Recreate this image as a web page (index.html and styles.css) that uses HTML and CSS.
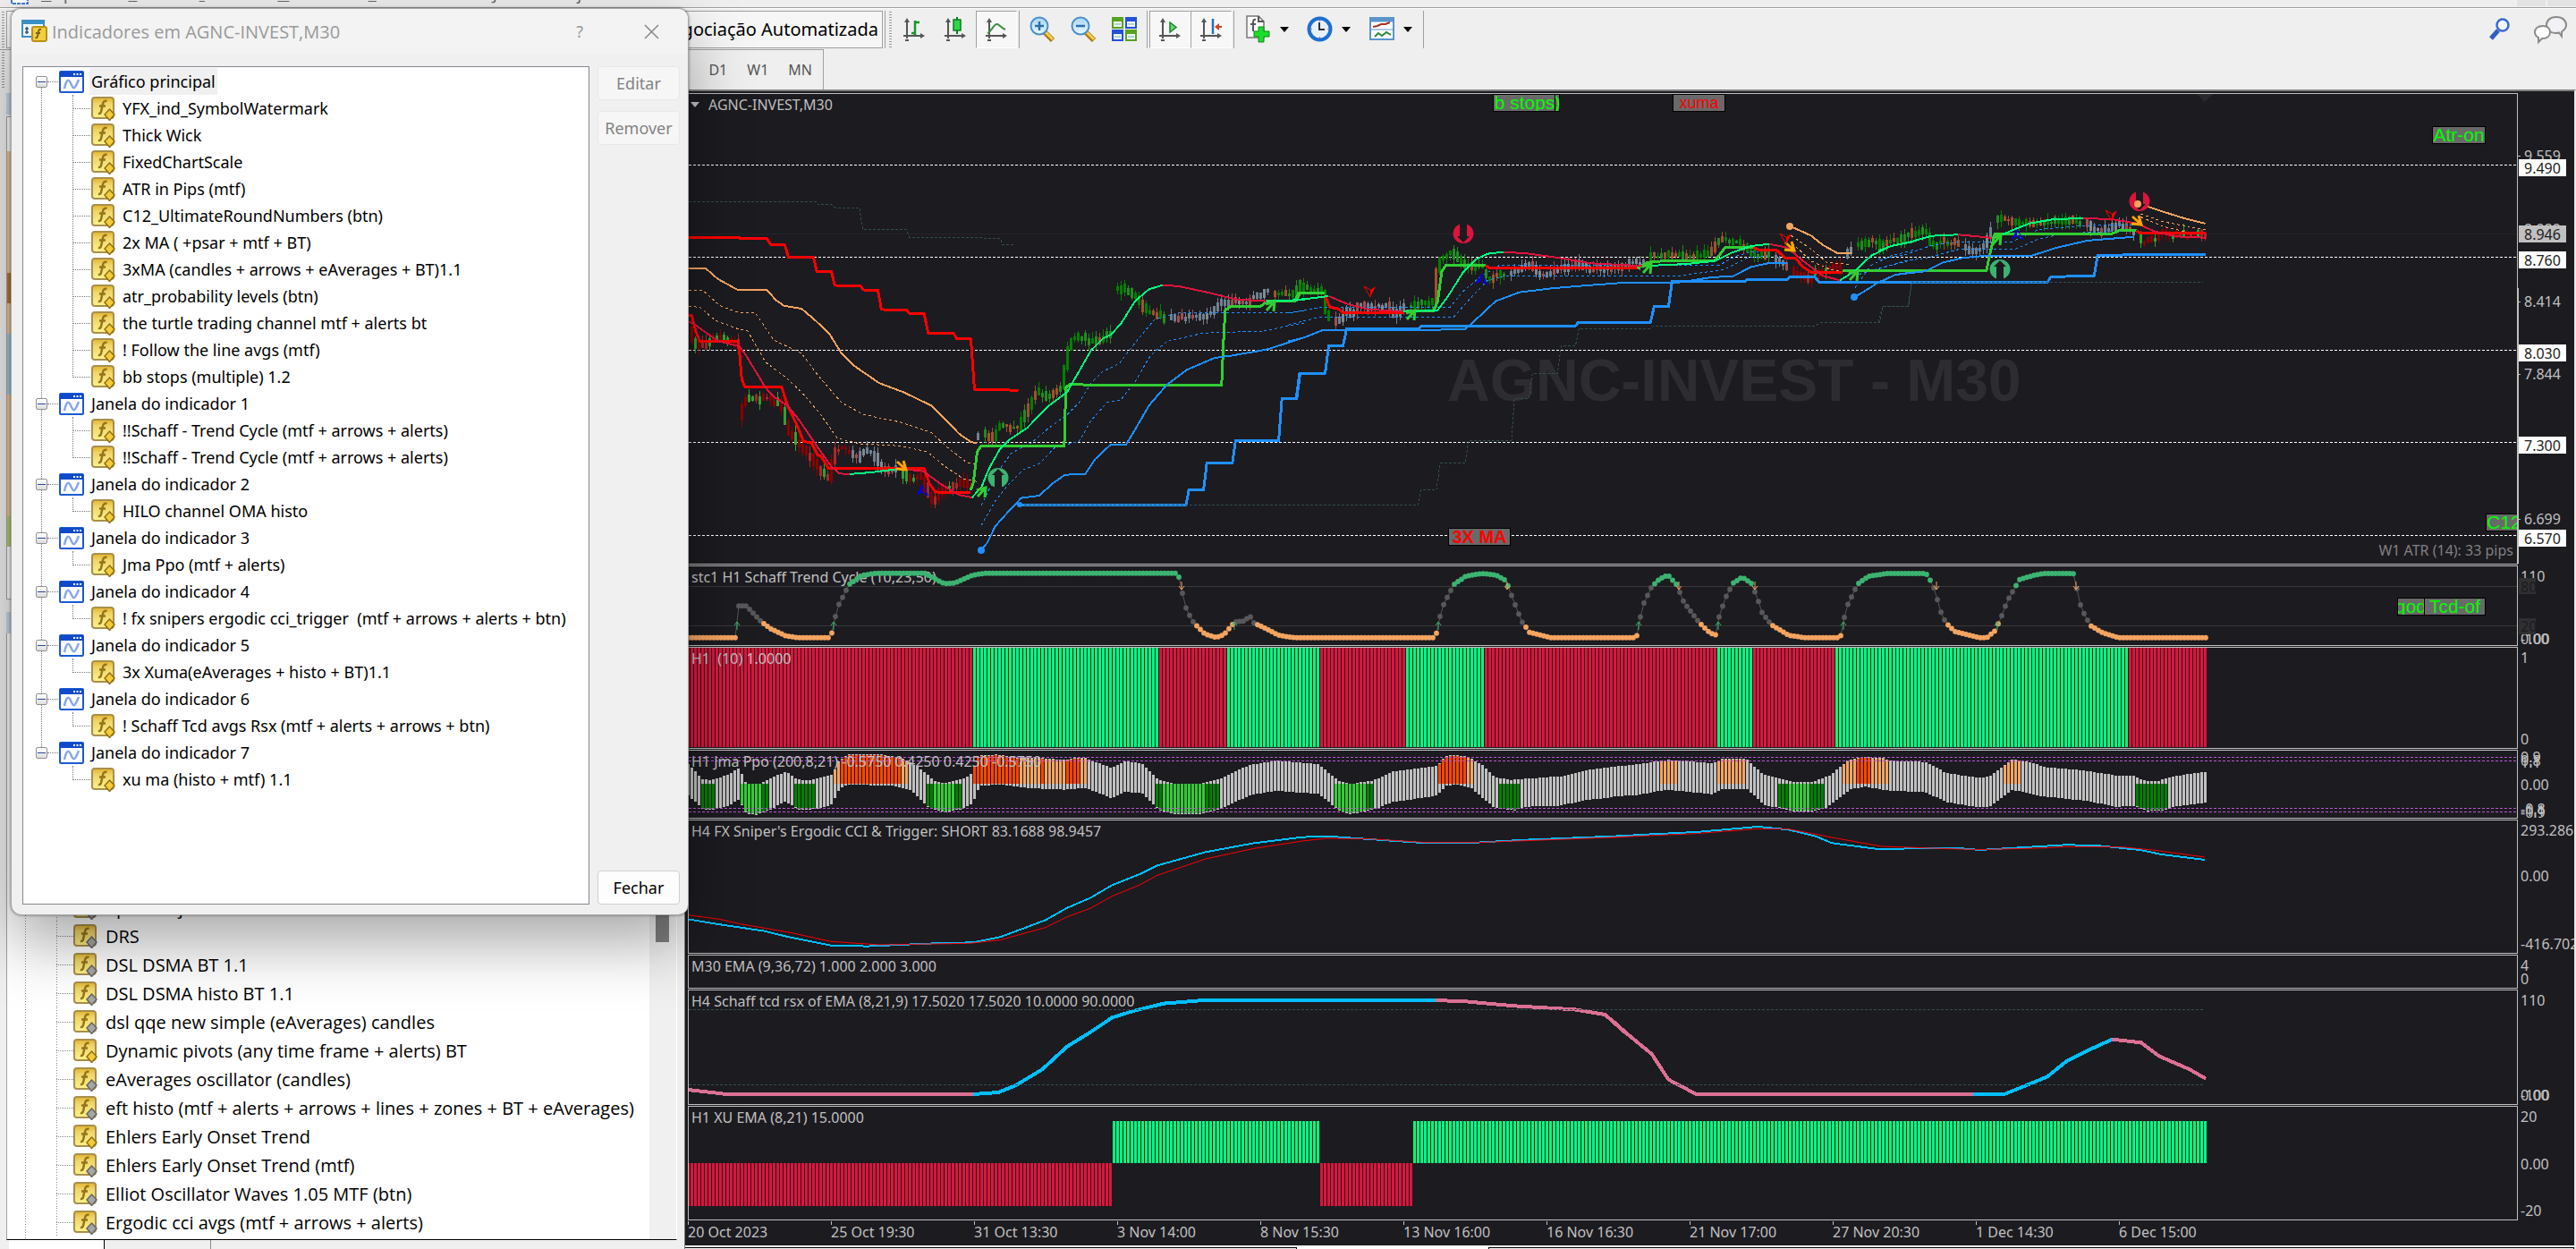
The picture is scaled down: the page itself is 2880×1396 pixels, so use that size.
FILE: index.html
```html
<!DOCTYPE html>
<html lang="pt">
	<head>
		<meta charset="utf-8">
		<title>AGNC-INVEST,M30</title>
		<link rel="stylesheet" href="styles.css">
	</head>
	<body>

		<!-- icons -->
		<svg class="defs">
			<defs>
				<linearGradient id="gold" x1="0" y1="0" x2="0" y2="1">
					<stop offset="0" stop-color="#e3b32c"/>
					<stop offset=".3" stop-color="#f0d468"/>
					<stop offset="1" stop-color="#fdf28c"/>
				</linearGradient>
				<linearGradient id="glass" x1="0" y1="0" x2="0" y2="1">
					<stop offset="0" stop-color="#a9d5f5"/>
					<stop offset="1" stop-color="#eaf7ff"/>
				</linearGradient>
			</defs>
			<symbol id="ind" viewBox="0 0 27 27">
				<rect x="1" y="1" width="24" height="23" rx="3" fill="url(#gold)" stroke="#a88f4c" stroke-width="2"/>
				<path d="M17.500 5c-2.500-.8-4 .5-4.500 3l-2 9c-.4 1.800-1.500 2.300-3 1.800M9 10.500h7" fill="none" stroke="#93751c" stroke-width="2.500"/>
				<path class="gem" d="M20.500 14l5.500 6-5.500 6.500-5.500-6.500z"/>
			</symbol>
			<symbol id="win" viewBox="0 0 28 25">
				<rect x="1" y="1" width="26" height="23" rx="1" fill="#fff" stroke="#1c5ad2" stroke-width="2"/>
				<path d="M1 1h26v6H1z" fill="#0f49cc"/>
				<path d="M16 3h2v2h-2zM19.500 3h2v2h-2zM23 3h2v2h-2z" fill="#fff"/>
				<path d="M6 20c1-6 3-10 5-9s3 7 5 8 4-4 6-9" fill="none" stroke="#86a8ea" stroke-width="2.500"/>
			</symbol>
			<symbol id="axes" viewBox="0 0 26 26">
				<path d="M5 3v20M1 20h22" fill="none" stroke="#555" stroke-width="2"/>
				<path d="M5 0l3 5H2zM25 20l-5-3v6zM3 24h4v2H3z" fill="#555"/>
			</symbol>
			<symbol id="lens" viewBox="0 0 30 30">
				<path d="M18 18l9 9" stroke="#a87a13" stroke-width="6"/>
				<path d="M19 18l8 8" stroke="#f5cf4d" stroke-width="3"/>
				<circle cx="12" cy="11" r="9.500" fill="url(#glass)" stroke="#4a8fcf" stroke-width="2"/>
			</symbol>
		</svg>

		<header class="menu">
			<svg class="menu-icon" viewBox="0 0 20 8"><path d="M1 0v4h18V0" fill="#fff" stroke="#4a7fd6" stroke-width="2" stroke-dasharray="4 1"/></svg>
			<nav>
				<button><u>A</u>rquivo</button>
				<button><u>E</u>xibir</button>
				<button><u>I</u>nserir</button>
				<button><u>G</u>ráficos</button>
				<button><u>F</u>erramentas</button>
				<button><u>J</u>anela</button>
				<button>Ajuda</button>
			</nav>
			<div class="win-btns"><i></i><i></i></div>
		</header>

		<div class="toolbar">
			<span class="grip"></span>
			<button class="auto">Negociação Automatizada</button>
			<span class="sep"></span>
			<span class="grip"></span>
			<button class="tool" aria-label="Barras"><svg width="26" height="26"><use href="#axes"/><path d="M14 3v16M14 5h5M10 17h4" fill="none" stroke="#18962a" stroke-width="2.500"/></svg></button>
			<button class="tool" aria-label="Velas"><svg width="26" height="26"><use href="#axes"/><path d="M15-1v19" stroke="#0c7c1c" stroke-width="2"/><rect x="11" y="2" width="8" height="12" fill="#2fd745" stroke="#0c7c1c" stroke-width="1.500"/></svg></button>
			<button class="tool on" aria-label="Linha"><svg width="26" height="26"><use href="#axes"/><path d="M3 17c5-2 7-11 11-10 3 1 5 5 9 6" fill="none" stroke="#3f8f46" stroke-width="2"/></svg></button>
			<span class="sep"></span>
			<button class="tool" aria-label="Mais zoom"><svg width="30" height="30"><use href="#lens"/><path d="M7 11h10M12 6v10" stroke="#2a6fb0" stroke-width="2.500"/></svg></button>
			<button class="tool" aria-label="Menos zoom"><svg width="30" height="30"><use href="#lens"/><path d="M7 11h10" stroke="#2a6fb0" stroke-width="2.500"/></svg></button>
			<button class="tool" aria-label="Lado a lado"><svg width="28" height="28"><path d="M0 0h13v13H0zM15 14h13v13H15z" fill="#58a31c"/><path d="M15 0h13v13H15zM0 14h13v13H0z" fill="#2350d8"/><path d="M2 5h9v6H2zM17 5h9v6h-9zM2 19h9v6H2zM17 19h9v6h-9z" fill="#eef4ff"/><path d="M3 8h7M18 8h7M3 22h7M18 22h7" stroke="#9cc" stroke-width="1.500"/></svg></button>
			<span class="sep"></span>
			<button class="tool on" aria-label="Rolagem automática"><svg width="26" height="26"><use href="#axes"/><path d="M13 5l7 5.500-7 5.500z" fill="#6fd37c" stroke="#14892a" stroke-width="1.500"/></svg></button>
			<button class="tool on" aria-label="Deslocar gráfico"><svg width="26" height="26"><use href="#axes"/><path d="M15 1v17" stroke="#2a6fb0" stroke-width="2.500"/><path d="M17 10l5-4v8zM20 9h5v2h-5z" fill="#d3401a"/></svg></button>
			<span class="sep"></span>
			<button class="tool wide" aria-label="Indicadores"><svg width="28" height="31"><path d="M1 1h13l6 6v18H1z" fill="#fff" stroke="#777" stroke-width="1.500"/><path d="M14 1v6h6M11 5c-3-1-3 2-3 4v9M5 10h6" fill="none" stroke="#555" stroke-width="2"/><path d="M14 13h6v5h6v6h-6v6h-6v-6H9v-6h5z" fill="#1fdc2c" stroke="#0b8d15"/></svg><b></b></button>
			<button class="tool wide" aria-label="Períodos"><svg width="29" height="29"><circle cx="14.500" cy="14.500" r="12" fill="#e8f1fb" stroke="#1f6fd0" stroke-width="4"/><path d="M14 7v8h6" fill="none" stroke="#333" stroke-width="2"/><path d="M14.500 4v2M14.500 23v2M4 14.500h2M23 14.500h2" stroke="#888"/></svg><b></b></button>
			<button class="tool wide" aria-label="Modelos"><svg width="28" height="27"><rect x="1" y="1" width="26" height="24" fill="#fff" stroke="#5a94cc" stroke-width="2"/><path d="M1 1h26v4H1zM1 14h26" fill="#5a94cc" stroke="#5a94cc"/><path d="M4 11l5-1 4-2 5 0 5-2" fill="none" stroke="#a2331f" stroke-width="2"/><path d="M6 22l4-4 4 3 5-4 5 3" fill="none" stroke="#2b8a33" stroke-width="2"/></svg><b></b></button>
			<span class="sep end"></span>
			<div class="right-tools">
				<button aria-label="Pesquisar"><svg width="25" height="25"><path d="M10 14l-8 9" stroke="#2f5fc0" stroke-width="5"/><circle cx="15" cy="8" r="6.500" fill="#f4f8ff" stroke="#3a6cd0" stroke-width="2.500"/></svg></button>
				<button aria-label="Conversa"><svg width="38" height="30"><path d="M26 1c-7 0-11 4-11 9s4 9 10 9c2 0 3 0 4-.5l3 4v-5c3-2 5-4 5-7.500 0-5-4-9-11-9z" fill="#f2f2f6" stroke="#8b8b8b" stroke-width="2"/><path d="M11 11c-6 0-9 3-9 7s2 5 4 6v5l4-4c6 0 9-3 9-7s-3-7-8-7z" fill="#fff" stroke="#8b8b8b" stroke-width="2"/></svg></button>
			</div>
		</div>

		<div class="toolbar periods">
			<span class="grip"></span>
			<button>D1</button>
			<button>W1</button>
			<button>MN</button>
		</div>

		<div class="workspace">

			<aside class="side">
				<div class="market">
					<div class="caption"></div>
					<div class="rows"></div>
				</div>
				<div class="nav">
					<div class="caption"></div>
					<div class="nav-list">
						<ul>
							<li><svg class="grey"><use href="#ind"/></svg>optwma jma ribbon</li>
							<li><svg class="grey"><use href="#ind"/></svg>DRS</li>
							<li><svg class="grey"><use href="#ind"/></svg>DSL DSMA BT 1.1</li>
							<li><svg class="grey"><use href="#ind"/></svg>DSL DSMA histo BT 1.1</li>
							<li><svg class="grey"><use href="#ind"/></svg>dsl qqe new simple (eAverages) candles</li>
							<li><svg><use href="#ind"/></svg>Dynamic pivots (any time frame + alerts) BT</li>
							<li><svg class="grey"><use href="#ind"/></svg>eAverages oscillator (candles)</li>
							<li><svg class="grey"><use href="#ind"/></svg>eft histo (mtf + alerts + arrows + lines + zones + BT + eAverages)</li>
							<li><svg><use href="#ind"/></svg>Ehlers Early Onset Trend</li>
							<li><svg class="grey"><use href="#ind"/></svg>Ehlers Early Onset Trend (mtf)</li>
							<li><svg class="grey"><use href="#ind"/></svg>Elliot Oscillator Waves 1.05 MTF (btn)</li>
							<li><svg class="grey"><use href="#ind"/></svg>Ergodic cci avgs (mtf + arrows + alerts)</li>
						</ul>
						<div class="scroll"><i></i></div>
					</div>
					<div class="tabs">
						<button class="active">Comum</button>
						<button>Favoritos</button>
					</div>
				</div>
			</aside>

			<main class="chart">

				<section class="panel p-main">
					<div class="plot">
						<div class="watermark">AGNC-INVEST - M30</div>
						<svg class="lines" viewBox="770 105 2044 525" preserveAspectRatio="none">
							<path class="faint" d="M770 261.500H2814"/>
							<path class="round" d="M770 184.500H2814M770 287.500H2814M770 391.500H2814M770 494.500H2814M770 598.500H2814"/>
							<path d="M2456 105h18l-9 9z" fill="#2a2a2c"/>
							<g id="candles"></g>

							<g transform="translate(760 180) scale(.4464 .3333)">
								<polyline class="ch" points="22,136 340,136 345,145 380,146 388,156 450,157 458,229 568,230 575,256 733,257 803,260 808,281 840,281"/>
								<polyline class="sandy d" points="22,433 58,434 100,485 145,507 190,510 235,600 305,645 350,725 405,810 460,850 550,875 630,910 670,960 720,1012 745,1018"/>
								<polyline class="sandy d" points="22,487 50,490 90,535 150,565 170,570 215,675 265,725 305,775 350,845 395,930 450,948 550,955 620,975 660,1020 710,1065 745,1075"/>
								<polyline class="blue d" points="755,1155 775,1100 800,1035 830,980 880,945 920,900 970,850 1000,810 1030,745 1060,705 1100,680 1140,610 1190,530 1250,510 1540,508 1568,500"/>
								<polyline class="blue d" points="755,1222 790,1140 820,1090 860,1035 900,1015 940,960 1000,940 1030,870 1070,810 1105,800 1140,740 1180,650 1220,605 1310,577 1460,570 1568,542"/>
								<polyline class="red w3" points="22,256 150,256 150,259 218,260 228,280 263,281 272,322 335,323 343,370 380,371 388,417 452,418 460,432 496,433 505,498 568,499 575,511 612,512 622,577 686,578 693,595 729,596 738,766 803,766 848,770"/>
								<polyline class="red w3" points="22,517 30,518 40,570 50,604 145,604 150,650 155,730 163,757 255,757 270,820 295,890 310,940 330,945 345,985 355,992 372,1030 612,1030 625,1080 640,1110 728,1112"/>
								<polyline class="lime w3" points="728,1105 735,1080 745,975 755,955 963,955 967,760 975,750 1357,751 1362,600 1366,500 1380,488 1455,487 1470,470 1540,468 1550,443 1568,442"/>
								<polyline class="crim" points="22,540 35,545 60,570 95,603 150,622 165,650 215,760 235,790 270,820 300,870 335,940 380,1025 400,1048 425,1050"/>
								<polyline class="spring" points="425,1050 480,1044 550,1032"/>
								<polyline class="crim" points="550,1032 610,1040 650,1080 700,1120 732,1128"/>
								<polyline class="spring" points="732,1128 755,1095 775,1030 800,970 825,935 870,895 920,825 970,775 1000,705 1030,635 1060,595 1080,582 1105,545 1140,470 1175,430 1210,416"/>
								<polyline class="crim" points="1210,416 1250,420 1320,440 1390,463 1470,470"/>
								<polyline class="spring" points="1470,470 1540,468 1568,463"/>
								<polyline class="sandy" points="22,360 65,360 95,395 145,432 218,432 240,465 260,485 305,495 340,535 375,580 405,645 435,685 500,745 560,775 630,820 660,860 700,915 730,943 745,945"/>
								<polyline class="blue" points="755,1304 770,1280 790,1225 820,1180 855,1130 900,1122 935,1080 965,1052 1015,1050 1040,1000 1080,950 1118,950 1145,890 1175,820 1220,750 1270,700 1340,660 1380,653 1470,632 1510,615 1568,590"/>
								<polyline class="blue w3" points="852,1153 1268,1153 1275,1103 1312,1102 1320,1012 1384,1012 1392,938 1500,938 1508,797 1544,797 1552,713 1568,712"/>
								<polyline class="ch" points="852,1153 1568,1153"/>
							</g>

							<g transform="translate(1440 180) scale(.4464 .3333)">
								<polyline class="ch" points="0,1153 326,1153 333,1102 372,1102 381,1012 444,1012 452,938 560,937 567,797 603,797 612,712 675,712 684,619 720,619 729,562 907,562 916,553 1322,553 1332,541 1482,541 1490,487 1554,487 1562,406"/>
								<polyline class="blue d" points="0,510 80,491 405,491 440,435 480,390 530,349 1080,349 1120,320 1160,305 1210,300"/>
								<polyline class="blue d" points="0,550 80,523 415,523 450,470 500,400 540,386 980,385 1060,370 1090,365 1150,325 1200,318"/>
								<polyline class="blue d" points="1420,425 1460,350 1510,318 1568,298"/>
								<polyline class="blue d" points="1430,380 1480,360 1568,330"/>
								<polyline class="sandy d" points="1260,250 1310,295 1350,340 1410,347"/>
								<polyline class="sandy d" points="1262,275 1310,335 1360,365 1410,373"/>
								<polyline class="lime w3" points="0,470 22,468 30,442 92,442"/>
								<polyline class="red w3" points="92,450 105,490 125,495 137,508 292,508"/>
								<polyline class="lime w3" points="295,503 365,502 375,470 385,370 395,350 495,349"/>
								<polyline class="red w3" points="495,349 505,360 875,360"/>
								<polyline class="lime w3" points="875,360 900,340 940,335 1070,333 1095,290 1165,290"/>
								<polyline class="red w3" points="1165,290 1180,298 1225,300 1245,325 1270,325 1290,355 1310,373 1390,373"/>
								<polyline class="lime w3" points="1390,367 1568,367"/>
								<polyline class="spring" points="0,468 60,460 102,453"/>
								<polyline class="crim" points="102,453 150,480 200,497 290,505"/>
								<polyline class="spring" points="290,505 375,500 400,455 440,370 470,330 500,311 540,305"/>
								<polyline class="crim" points="540,305 600,310 680,325 760,343 890,352"/>
								<polyline class="spring" points="890,352 1000,345 1070,335 1110,308 1160,285 1205,278"/>
								<polyline class="crim" points="1205,278 1250,290 1290,335 1340,385 1383,400"/>
								<polyline class="spring" points="1383,400 1420,368 1460,318 1510,285 1568,270"/>
								<polyline class="sandy" points="1257,218 1310,250 1340,282 1375,308 1412,310"/>
								<polyline class="blue" points="0,605 40,592 85,568 350,567 445,563 480,520 520,470 580,440 660,427 740,418 840,408 980,407 1060,390 1115,386 1160,355 1205,342 1250,342"/>
								<polyline class="blue" points="1418,456 1440,440 1475,410 1520,382 1568,372"/>
								<polyline class="blue w3" points="0,797 22,797 30,713 93,712 102,619 138,619 147,562 328,562 335,553 720,553 727,541 908,541 917,488 953,488 962,404 1143,404 1150,398 1250,398 1257,388 1320,388 1330,406 1568,406"/>
							</g>

							<g transform="translate(2100 90) scale(.4974 .3508)">
								<polyline class="ch" points="0,770 10,719 67,719 75,643"/>
								<polyline class="blue d" points="0,570 60,555 120,525 180,514 300,514 360,475 460,462 575,461"/>
								<polyline class="blue d" points="0,600 60,575 110,565 180,538 310,536 360,505 420,487 575,478"/>
								<polyline class="sandy d" points="590,425 640,450 735,475"/>
								<polyline class="sandy d" points="590,435 640,465 700,485 735,490"/>
								<polyline class="lime w3" points="0,605 243,605 252,545 262,488 525,488 545,476 580,478"/>
								<polyline class="red w3" points="580,478 588,486 735,486"/>
								<polyline class="spring" points="0,543 30,527 70,515 120,495 180,491"/>
								<polyline class="crim" points="180,491 260,502"/>
								<polyline class="spring" points="260,502 300,478 340,455 390,443 460,438"/>
								<polyline class="crim" points="460,438 530,443 580,455 620,480 670,497 735,501"/>
								<polyline class="sandy" points="588,393 640,418 690,440 735,456"/>
								<polyline class="blue" points="5,640 40,618 105,608 145,580 190,565 245,558 345,558 400,533 470,510 575,498"/>
								<polyline class="blue w3" points="0,643 380,643 388,625 485,623 493,557 595,555 735,554"/>
								<polyline class="ch" points="75,643 730,643"/>
							</g>

							<g fill="#1e90ff"><circle cx="1097" cy="615" r="4"/><circle cx="1140" cy="564" r="3"/><circle cx="2073" cy="332" r="4"/></g>
							<g id="marks"></g>
							<g fill="#f4a460"><circle cx="2001" cy="253" r="4"/><circle cx="2390" cy="228" r="4"/></g>
						</svg>
						<h1 class="label sym">AGNC-INVEST,M30</h1>
						<button class="badge b-stops">b stops</button>
						<button class="badge b-stops2">)</button>
						<button class="badge b-xuma">xuma</button>
						<button class="badge b-3x">3X MA</button>
						<button class="badge b-atr">Atr-on</button>
						<button class="badge b-c12">C12</button>
						<span class="label atr">W1 ATR (14): 33 pips</span>
					</div>
					<svg class="axis" width="63" height="527" viewBox="2815 104 63 527">
						<path d="M2815 174.500h3M2815 337.500h3M2815 418.500h3M2815 580.500h3" stroke="silver"/>
						<path d="M2815.500 322v308" stroke="silver"/>
						<text x="2822" y="180">9.559</text>
						<text x="2822" y="262">8.989</text>
						<text x="2822" y="343">8.414</text>
						<text x="2822" y="424">7.844</text>
						<text x="2822" y="586">6.699</text>
						<path d="M2816 178h53v19h-53zM2816 281h53v19h-53zM2816 385h53v19h-53zM2816 488h53v19h-53zM2816 592h53v19h-53z" fill="#fff"/>
						<path d="M2816 252h53v19h-53z" fill="silver"/>
						<g class="dark">
							<text x="2822" y="194">9.490</text>
							<text x="2822" y="268">8.946</text>
							<text x="2822" y="297">8.760</text>
							<text x="2822" y="401">8.030</text>
							<text x="2822" y="504">7.300</text>
							<text x="2822" y="608">6.570</text>
						</g>
					</svg>
				</section>

				<section class="panel p-stc">
					<div class="plot">
						<span class="label">stc1 H1 Schaff Trend Cycle (10,23,50)</span>
						<svg class="lines" viewBox="770 633 2044 88" preserveAspectRatio="none">
							<path class="level" d="M770 655.500H2814M770 699.500H2814"/>
							<g id="stc"></g>
						</svg>
						<button class="badge b-god">god</button>
						<button class="badge b-tcd">Tcd-of</button>
					</div>
					<svg class="axis" width="63" height="90" viewBox="2815 632 63 90">
						<text x="2818" y="650">110</text>
						<text x="2818" y="720">0.00</text>
						<text x="2818" y="720">-100</text>
						<path d="M2816 646h19v18h-19zM2816 691h19v18h-19z" fill="#303032"/>
						<g class="dark"><text x="2818" y="662">80</text><text x="2818" y="706">20</text></g>
					</svg>
				</section>

				<section class="panel p-hilo">
					<div class="plot">
						<svg class="lines" viewBox="770 724 2044 112" preserveAspectRatio="none"><g id="hilo"></g></svg>
						<span class="label">H1&nbsp; (10) 1.0000</span>
					</div>
					<svg class="axis" width="63" height="114" viewBox="2815 723 63 114">
						<text x="2818" y="741">1</text>
						<text x="2818" y="832">0</text>
					</svg>
				</section>

				<section class="panel p-ppo">
					<div class="plot">
						<svg class="lines" viewBox="770 839 2044 75" preserveAspectRatio="none">
							<g id="ppo"></g>
							<path class="orchid" d="M770 846.500H2814M770 850.500H2814M770 903.500H2814M770 907.500H2814"/>
						</svg>
						<span class="label">H1 Jma Ppo (200,8,21) -0.5750 0.4250 0.4250 -0.5750</span>
					</div>
					<svg class="axis" width="63" height="77" viewBox="2815 838 63 77">
						<text x="2818" y="852">0.9</text>
						<text x="2818" y="856">0.8</text>
						<text x="2818" y="858">1.1</text>
						<text x="2818" y="883">0.00</text>
						<text x="2818" y="910">-0.8</text>
						<text x="2818" y="912">-1.1</text>
						<text x="2818" y="914">-0.9</text>
					</svg>
				</section>

				<section class="panel p-cci">
					<div class="plot">
						<svg class="lines" viewBox="770 917 2044 148" preserveAspectRatio="none">
							<g transform="translate(760 620) scale(.676 .3333)">
								<polyline class="sky" points="13,1222 60,1238 100,1250 140,1262 180,1282 250,1310 310,1313 410,1304 485,1300 530,1282 570,1252 605,1225 640,1185 680,1150 715,1108 760,1072 790,1042 870,997 950,967 1030,947 1070,944 1140,954 1235,967 1310,966 1400,956 1568,942"/>
								<polyline class="red w1" points="13,1208 65,1222 100,1238 185,1268 250,1297 330,1308 480,1303 530,1292 605,1250 640,1215 680,1185 715,1145 760,1108 790,1075 870,1020 950,985 1030,960 1070,951 1140,953 1235,965 1320,965 1568,946"/>
							</g>
							<g transform="translate(1800 620) scale(.6888 .3333)">
								<polyline class="sky" points="0,945 60,938 140,930 240,912 290,922 335,945 360,967 435,987 560,983 600,990 740,973 790,975 860,990 895,1005 965,1023"/>
								<polyline class="red w1" points="0,948 140,935 240,919 290,920 360,948 440,978 520,984 600,989 710,983 740,979 830,980 880,990 965,1014"/>
							</g>
						</svg>
						<span class="label">H4 FX Sniper's Ergodic CCI &amp; Trigger: SHORT 83.1688 98.9457</span>
					</div>
					<svg class="axis" width="63" height="150" viewBox="2815 916 63 150">
						<text x="2818" y="934">293.286</text>
						<text x="2818" y="985">0.00</text>
						<text x="2818" y="1061">-416.702</text>
					</svg>
				</section>

				<section class="panel p-ema">
					<div class="plot"><span class="label">M30 EMA (9,36,72) 1.000 2.000 3.000</span></div>
					<svg class="axis" width="63" height="38" viewBox="2815 1067 63 38">
						<text x="2818" y="1085">4</text>
						<text x="2818" y="1100">0</text>
					</svg>
				</section>

				<section class="panel p-tcd">
					<div class="plot">
						<span class="label">H4 Schaff tcd rsx of EMA (8,21,9) 17.5020 17.5020 10.0000 90.0000</span>
						<svg class="lines" viewBox="770 1107 2044 127" preserveAspectRatio="none">
							<g transform="translate(760 1060) scale(.676 .3333)">
								<polyline class="pink" points="13,474 70,487 75,489 485,489"/>
								<polyline class="sky" points="485,489 527,483 555,460 600,405 640,330 680,280 715,232 750,210 800,185 865,174 1250,174"/>
								<polyline class="pink" points="1250,174 1300,178 1380,193 1480,205 1530,222 1568,290"/>
							</g>
							<g transform="translate(1800 1060) scale(.6888 .3333)">
								<polyline class="pink" points="-40,174 -40,174"/>
								<polyline class="pink" points="0,235 30,290 68,355 95,440 140,489 590,489"/>
								<polyline class="sky" points="590,489 640,489 675,460 710,430 740,380 775,343 815,305"/>
								<polyline class="pink" points="815,305 862,316 892,362 940,405 967,437"/>
							</g>
							<path class="ch" d="M770 1128.500H2465M770 1212.500H2465"/>
						</svg>
					</div>
					<svg class="axis" width="63" height="129" viewBox="2815 1106 63 129">
						<text x="2818" y="1124">110</text>
						<text x="2818" y="1230">0.00</text>
						<text x="2818" y="1230">-100</text>
					</svg>
				</section>

				<section class="panel p-xu">
					<div class="plot">
						<svg class="lines" viewBox="770 1237 2044 126" preserveAspectRatio="none"><g id="xu"></g></svg>
						<span class="label">H1 XU EMA (8,21) 15.0000</span>
					</div>
					<svg class="axis" width="63" height="128" viewBox="2815 1236 63 128">
						<text x="2818" y="1254">20</text>
						<text x="2818" y="1307">0.00</text>
						<text x="2818" y="1359">-20</text>
					</svg>
				</section>

				<div class="time">
					<span>20 Oct 2023</span><span>25 Oct 19:30</span><span>31 Oct 13:30</span><span>3 Nov 14:00</span><span>8 Nov 15:30</span><span>13 Nov 16:00</span><span>16 Nov 16:30</span><span>21 Nov 17:00</span><span>27 Nov 20:30</span><span>1 Dec 14:30</span><span>6 Dec 15:00</span>
				</div>
				<div class="chart-tabs"><i></i><i></i><i></i></div>
			</main>
		</div>

		<!-- indicator list window -->
		<div class="dialog" role="dialog" aria-labelledby="dlg-title">
			<div class="title">
				<svg width="30" height="26" viewBox="0 0 30 26"><rect x="1" y="1" width="24" height="18" fill="#eef7ff" stroke="#3b8fc4" stroke-width="2"/><path d="M1 1h24v4H1z" fill="#3b8fc4"/><path d="M6 8v8M4 10h4M4 14h4" stroke="#357" stroke-width="1.500"/><rect x="12" y="8" width="16" height="16" rx="2" fill="#f3cf3e" stroke="#b98f1a" stroke-width="2"/><path d="M22 11c-3-1-3 2-3.500 5s-1 5-3 4M16 15h5" fill="none" stroke="#80651a" stroke-width="2"/></svg>
				<h2 id="dlg-title">Indicadores em AGNC-INVEST,M30</h2>
				<button class="help">?</button>
				<button class="close" aria-label="Fechar janela"><svg width="17" height="17"><path d="M1 1l15 15M16 1L1 16" stroke="#888" stroke-width="1.500"/></svg></button>
			</div>
			<div class="dlg-body">
				<ul class="tree">
					<li><p><i></i><svg><use href="#win"/></svg><span class="sel">Gráfico principal</span></p>
						<ul>
							<li><svg><use href="#ind"/></svg>YFX_ind_SymbolWatermark</li>
							<li><svg><use href="#ind"/></svg>Thick Wick</li>
							<li><svg><use href="#ind"/></svg>FixedChartScale</li>
							<li><svg><use href="#ind"/></svg>ATR in Pips (mtf)</li>
							<li><svg><use href="#ind"/></svg>C12_UltimateRoundNumbers (btn)</li>
							<li><svg><use href="#ind"/></svg>2x MA ( +psar + mtf + BT)</li>
							<li><svg><use href="#ind"/></svg>3xMA (candles + arrows + eAverages + BT)1.1</li>
							<li><svg><use href="#ind"/></svg>atr_probability levels (btn)</li>
							<li><svg><use href="#ind"/></svg>the turtle trading channel mtf + alerts bt</li>
							<li><svg><use href="#ind"/></svg>! Follow the line avgs (mtf)</li>
							<li><svg><use href="#ind"/></svg>bb stops (multiple) 1.2</li>
						</ul>
					</li>
					<li><p><i></i><svg><use href="#win"/></svg><span>Janela do indicador 1</span></p>
						<ul>
							<li><svg><use href="#ind"/></svg>!!Schaff - Trend Cycle (mtf + arrows + alerts)</li>
							<li><svg><use href="#ind"/></svg>!!Schaff - Trend Cycle (mtf + arrows + alerts)</li>
						</ul>
					</li>
					<li><p><i></i><svg><use href="#win"/></svg><span>Janela do indicador 2</span></p>
						<ul><li><svg><use href="#ind"/></svg>HILO channel OMA histo</li></ul>
					</li>
					<li><p><i></i><svg><use href="#win"/></svg><span>Janela do indicador 3</span></p>
						<ul><li><svg><use href="#ind"/></svg>Jma Ppo (mtf + alerts)</li></ul>
					</li>
					<li><p><i></i><svg><use href="#win"/></svg><span>Janela do indicador 4</span></p>
						<ul><li><svg><use href="#ind"/></svg>! fx snipers ergodic cci_trigger&nbsp; (mtf + arrows + alerts + btn)</li></ul>
					</li>
					<li><p><i></i><svg><use href="#win"/></svg><span>Janela do indicador 5</span></p>
						<ul><li><svg><use href="#ind"/></svg>3x Xuma(eAverages + histo + BT)1.1</li></ul>
					</li>
					<li><p><i></i><svg><use href="#win"/></svg><span>Janela do indicador 6</span></p>
						<ul><li><svg><use href="#ind"/></svg>! Schaff Tcd avgs Rsx (mtf + alerts + arrows + btn)</li></ul>
					</li>
					<li><p><i></i><svg><use href="#win"/></svg><span>Janela do indicador 7</span></p>
						<ul><li><svg><use href="#ind"/></svg>xu ma (histo + mtf) 1.1</li></ul>
					</li>
				</ul>
				<div class="actions">
					<button disabled>Editar</button>
					<button disabled>Remover</button>
					<button class="ok">Fechar</button>
				</div>
			</div>
		</div>

		<script src="chart.js"></script>
	</body>
</html>
```

FILE: styles.css
```css
* {
	margin: 0;
	padding: 0;
	box-sizing: border-box;
}

body {
	display: flex;
	flex-direction: column;
	height: 100vh;
	overflow: hidden;
	background-color: #efefef;
	font-family: "Noto Sans", sans-serif;
	font-size: 18px;
	color: #000;
}

ul {
	list-style: none;
}

button {
	border: 0;
	background: none;
	font: inherit;
	color: inherit;
}

svg {
	display: block;
	flex: none;
}

.defs {
	position: absolute;
	width: 0;
	height: 0;
}

/* menu */
.menu {
	display: flex;
	align-items: flex-end;
	height: 9px;
	flex: none;
	overflow: hidden;
	border-bottom: 1px solid #a0a0a0;
}

.menu-icon {
	width: 20px;
	height: 8px;
	margin-left: 12px;
}

.menu nav {
	display: flex;
	gap: 32px;
	margin-left: 14px;
	padding-bottom: 5px;
	line-height: 20px;
	color: #666;
}

.win-btns {
	display: flex;
	gap: 2px;
	margin-left: auto;
	padding-bottom: 1px;
}

.win-btns i {
	width: 32px;
	height: 7px;
	background-color: #e3e3e3;
}

/* toolbars */
.toolbar {
	display: flex;
	align-items: center;
	flex: none;
	height: 46px;
	border-top: 1px solid #fff;
}

.periods {
	width: 921px;
	height: 45px;
	border-top: 1px solid #a0a0a0;
	border-right: 1px solid #a0a0a0;
	padding-right: 12px;
	justify-content: flex-end;
	gap: 22px;
	font-size: 16px;
	color: #555;
}

.periods .grip {
	margin-right: auto;
}

.grip {
	width: 3px;
	height: 40px;
	margin: 0 2px;
	background: repeating-linear-gradient(#999 0 1px, #efefef 1px 3px);
}

.auto {
	width: 980px;
	height: 42px;
	padding-right: 4px;
	text-align: right;
	font-size: 20px;
	background-color: #f6f6f6;
	border: 1px solid #a0a0a0;
}

.sep {
	width: 1px;
	height: 42px;
	margin: 0 2px;
	background-color: #a0a0a0;
}

.tool {
	display: flex;
	align-items: center;
	justify-content: center;
	width: 46px;
	height: 42px;
}

.tool svg,
.right-tools svg {
	overflow: visible;
}

.tool.on {
	background-color: #f7f7f7;
	border: 1px solid;
	border-color: #a0a0a0 #fff #fff #a0a0a0;
}

.tool.wide {
	width: 69px;
	gap: 10px;
}

.tool b {
	border: 5px solid transparent;
	border-top: 6px solid #000;
	border-bottom: 0;
}

.right-tools {
	display: flex;
	align-items: center;
	gap: 24px;
	margin-left: auto;
	padding-right: 10px;
}

/* left side */
.workspace {
	display: flex;
	flex: 1;
	min-height: 0;
}

.side {
	display: flex;
	flex-direction: column;
	width: 765px;
	flex: none;
	padding: 4px 8px 0 7px;
}

.market {
	height: 580px;
}

.caption {
	height: 24px;
	background-color: #c6d3e3;
}

.market .rows {
	height: 540px;
	margin-top: 2px;
	border: 1px solid #a0a0a0;
	background: linear-gradient(#fff 0 38px, #f0c48c 38px 174px, #b8753a 174px 208px, #f0c48c 208px 242px, #9cc8dc 242px 310px, #f0c48c 310px 446px, #b4cc74 446px 480px, #fff 480px);
}

.nav {
	display: flex;
	flex-direction: column;
	flex: 1;
	min-height: 0;
}

.nav-list {
	display: flex;
	flex: 1;
	min-height: 0;
	overflow: hidden;
	background-color: #fff;
	border-left: 1px solid #a0a0a0;
	border-bottom: 1px solid #000;
	border-right: 1px solid #fff;
}

.nav-list ul {
	flex: 1;
	padding-top: 290px;
	padding-left: 20px;
	background: repeating-linear-gradient(#888 0 1px, #fff 1px 3px) 20px 0 / 1px 100% no-repeat;
}

.nav-list li {
	display: flex;
	align-items: center;
	gap: 9px;
	height: 32px;
	padding-left: 35px;
	font-family: "Open Sans", sans-serif;
	font-size: 20px;
	white-space: nowrap;
	background: repeating-linear-gradient(#888 0 1px, #fff 1px 3px) 35px 0 / 1px 100% no-repeat;
}

.nav-list li::before {
	content: "";
	width: 19px;
	margin-right: -9px;
	border-top: 1px dotted #888;
}

.nav-list li svg {
	width: 27px;
	height: 27px;
}

.scroll {
	width: 30px;
	background-color: #f0f0f0;
}

.scroll i {
	display: block;
	width: 15px;
	height: 345px;
	margin-left: 7px;
	background-color: #808080;
}

.tabs {
	display: flex;
	height: 10px;
	flex: none;
	overflow: hidden;
	margin-left: 3px;
}

.tabs button {
	width: 119px;
	height: 30px;
	padding-top: 3px;
	line-height: 24px;
	color: #888;
	border-right: 1px solid #888;
}

.tabs .active {
	width: 107px;
	color: #000;
	background-color: #fff;
	border-color: #000;
}

.gem {
	fill: var(--gem, #f3cc3a);
	stroke: var(--gem-line, #8e6f14);
	stroke-width: 1.5;
}

.grey {
	--gem: #a6a6a6;
	--gem-line: #666;
}

/* chart window */
.chart {
	display: flex;
	flex-direction: column;
	flex: 1;
	min-width: 0;
	gap: 1px;
	padding: 2px 0 0 3px;
	border: 0 solid #808080;
	border-width: 2px 0 0 1px;
	border-right: 2px solid #e8e8e8;
	background-color: #1c1b20;
	font-size: 16px;
	color: silver;
}

.panel {
	display: flex;
	flex: none;
}

.p-main { height: 527px; }
.p-stc { height: 90px; }
.p-hilo { height: 114px; }
.p-ppo { height: 77px; }
.p-cci { height: 150px; }
.p-ema { height: 38px; }
.p-tcd { height: 129px; }
.p-xu { height: 128px; }

.plot {
	position: relative;
	flex: 1;
	min-width: 0;
	border: 1px solid silver;
	overflow: hidden;
}

.lines {
	position: absolute;
	top: 0;
	left: 0;
	width: 100%;
	height: 100%;
}

.lines path,
.lines polyline {
	vector-effect: non-scaling-stroke;
}

.lines polyline,
#candles,
#hilo,
#ppo,
#xu {
	shape-rendering: crispEdges;
}

.lines polyline {
	fill: none;
	stroke-width: 2px;
	stroke-linejoin: round;
}

.label {
	position: absolute;
	top: 1px;
	left: 3px;
	font-size: 16px;
	font-weight: normal;
	line-height: 22px;
	white-space: nowrap;
}

.sym {
	left: 2px;
	display: flex;
	align-items: center;
	gap: 10px;
}

.sym::before {
	content: "";
	border: 5px solid transparent;
	border-top: 6px solid silver;
	border-bottom: 0;
}

.atr {
	top: auto;
	left: auto;
	right: 4px;
	bottom: 4px;
	color: #808080;
}

.watermark {
	position: absolute;
	top: 284px;
	left: 848px;
	font-family: "Liberation Sans", sans-serif;
	font-size: 66px;
	font-weight: bold;
	line-height: 72px;
	color: #2d2c31;
	white-space: nowrap;
}

.faint { stroke: #252529; }
.level { stroke: #38383a; }
.round { stroke: #fff; stroke-dasharray: 3 2; }
.ch { stroke: #2f4f4f; stroke-dasharray: 3 2; }
.orchid { stroke: #ba55d3; stroke-dasharray: 3 2; }
.red { stroke: #f00; }
.crim { stroke: #dc143c; }
.lime { stroke: #32cd32; }
.spring { stroke: #00ff7f; }
.sandy { stroke: #f4a460; }
.blue { stroke: #1e90ff; }
.sky { stroke: #00bfff; }
.pink { stroke: #db7093; }

.lines .ch { stroke-width: 1px; }
.lines .w3 { stroke-width: 3px; }
.lines .w1 { stroke-width: 1px; }
.lines .d { stroke-width: 1px; stroke-dasharray: 3 3; }
.p-tcd polyline { stroke-width: 4px; }

.badge {
	position: absolute;
	display: flex;
	justify-content: center;
	align-items: center;
	height: 20px;
	overflow: hidden;
	font-family: "Liberation Sans", sans-serif;
	font-size: 21px;
	line-height: 20px;
	white-space: nowrap;
	color: #0f0;
	background-color: #696969;
	border: 1px solid #000;
}

.b-stops { top: 0; left: 899px; width: 71px; }
.b-stops2 { top: 0; left: 968px; width: 6px; }
.b-xuma { top: 0; left: 1100px; width: 59px; font-size: 18px; color: #f00; }
.b-3x { top: 485px; left: 849px; width: 70px; font-size: 20px; font-weight: bold; color: #f00; }
.b-atr { top: 36px; right: 35px; width: 60px; }
.b-c12 { top: 469px; right: -6px; width: 41px; }
.b-god { top: 35px; right: 103px; width: 31px; }
.b-tcd { top: 35px; right: 35px; width: 69px; }

.axis {
	width: 63px;
}

.axis text {
	font-size: 16px;
	fill: silver;
}

.axis .dark text {
	fill: #1c1b20;
}

.time {
	display: flex;
	height: 26px;
	flex: none;
}

.time span {
	width: 160px;
	line-height: 25px;
	white-space: nowrap;
	background: linear-gradient(silver, silver) 0 0 / 1px 4px no-repeat;
}

.chart-tabs {
	display: flex;
	flex: 1;
	margin-left: -3px;
	padding-top: 2px;
	background-color: #fff;
}

.chart-tabs i {
	width: 684px;
	border-top: 1px solid #000;
	border-right: 1px solid #000;
	background-color: #efefef;
}

.chart-tabs i:nth-child(2) {
	width: 215px;
	border-top: 0;
	background-color: #fff;
}

.chart-tabs i:last-child {
	flex: 1;
}

/* dialog */
.dialog {
	position: absolute;
	top: 9px;
	left: 12px;
	width: 758px;
	height: 1014px;
	display: flex;
	flex-direction: column;
	overflow: hidden;
	background-color: #f0f0f0;
	border: 1px solid #a8a8a8;
	border-radius: 12px;
	box-shadow: 0 30px 70px rgba(0, 0, 0, .35), 0 0 3px rgba(0, 0, 0, .5);
}

.title {
	display: flex;
	align-items: center;
	height: 50px;
	padding-left: 11px;
	background-color: #f3f3f3;
	color: #999;
}

.title h2 {
	margin-left: 4px;
	font-family: "Open Sans", sans-serif;
	font-size: 20px;
	font-weight: normal;
}

.help {
	margin-left: auto;
	margin-right: 68px;
	font-size: 18px;
}

.close {
	margin-right: 32px;
}

.dlg-body {
	display: flex;
	gap: 9px;
	flex: 1;
	padding: 14px 9px 11px 12px;
}

.tree {
	flex: 1;
	padding: 1px 0 0 14px;
	background-color: #fff;
	border: 1px solid #828790;
}

.tree > li {
	position: relative;
}

.tree > li::before {
	content: "";
	position: absolute;
	top: 15px;
	bottom: -15px;
	left: 6px;
	border-left: 1px dotted #777;
}

.tree > li:last-child::before {
	display: none;
}

.tree p {
	position: relative;
	display: flex;
	align-items: center;
	height: 30px;
}

.tree p i {
	width: 13px;
	height: 13px;
	border: 1px solid #919191;
	border-radius: 2px;
	background: linear-gradient(#2a4a9a, #2a4a9a) center / 9px 1px no-repeat, linear-gradient(#fff, #ddd);
}

.tree p::before {
	content: "";
	order: 1;
	width: 12px;
	border-top: 1px dotted #777;
}

.tree p svg {
	order: 2;
	width: 28px;
	height: 25px;
	margin: 0 6px 0 1px;
}

.tree p span {
	order: 3;
	padding: 0 2px;
	line-height: 30px;
}

.tree .sel {
	background-color: #f0f0f0;
}

.tree ul li {
	position: relative;
	display: flex;
	align-items: center;
	gap: 8px;
	height: 30px;
	padding-left: 62px;
	white-space: nowrap;
}

.tree ul li svg {
	width: 27px;
	height: 27px;
}

.tree ul li::before {
	content: "";
	position: absolute;
	top: -15px;
	left: 41px;
	width: 19px;
	height: 30px;
	border-left: 1px dotted #777;
	border-bottom: 1px dotted #777;
}

.tree ul li:first-child::before {
	top: 0;
	height: 15px;
}

.actions {
	display: flex;
	flex-direction: column;
	gap: 12px;
	width: 92px;
}

.actions button {
	height: 38px;
	background-color: #fdfdfd;
	border: 1px solid #d0d0d0;
	border-radius: 4px;
}

.actions button:disabled {
	color: #838383;
	background-color: #f6f6f6;
	border-color: #e8e8e8;
}

.actions .ok {
	margin-top: auto;
}
```

FILE: chart.js
```js
var NS = 'http://www.w3.org/2000/svg';

function add(id, tag, attrs) {
	var el = document.createElementNS(NS, tag);
	for (var k in attrs) {
		el.setAttribute(k, attrs[k]);
	}
	document.getElementById(id).appendChild(el);
}

// sampled points -> chart coordinates: [origin x, origin y, step x, step y]
var A = [760, 180, 2.24, 3];
var B = [1440, 180, 2.24, 3];
var C = [2100, 90, 2.0103, 2.851];
var L = [760, 620, 1.4792, 3];
var R = [1800, 620, 1.4519, 3];

function conv(o, pts) {
	var out = [];
	for (var i = 0; i < pts.length; i += 2) {
		out.push([o[0] + pts[i] / o[2], o[1] + pts[i + 1] / o[3]]);
	}
	return out;
}

function valueAt(pts, x) {
	for (var i = 1; i < pts.length; i++) {
		if (x <= pts[i][0]) {
			var a = pts[i - 1], b = pts[i];
			return a[1] + (b[1] - a[1]) * (x - a[0]) / (b[0] - a[0] || 1);
		}
	}
	return pts[pts.length - 1][1];
}

// bar painters, one bar = 4px
function bars(id, from, to, top, bottom, color) {
	var d = '';
	for (var x = 768 + Math.round((from - 768) / 4) * 4; x < to - 1; x += 4) {
		d += 'M' + x + ' ' + top + 'h3V' + bottom + 'h-3z';
	}
	add(id, 'path', { d: d, fill: color });
}

var edges = [769, 1088, 1295, 1372, 1476, 1571, 1660, 1920, 1960, 2051, 2380, 2466];
for (var i = 0; i < edges.length - 1; i++) {
	bars('hilo', edges[i], edges[i + 1], 724, 835, i % 2 ? '#00ff7f' : '#dc143c');
}

bars('xu', 769, 1243, 1300, 1348, '#dc143c');
bars('xu', 1243, 1476, 1253, 1300, '#00ff7f');
bars('xu', 1476, 1580, 1300, 1348, '#dc143c');
bars('xu', 1580, 2466, 1253, 1300, '#00ff7f');

// schaff trend cycle dots
var stc = conv(L, [13,278,92,278,96,172,110,172,135,225,150,248,175,272,195,278,250,278,255,225,262,172,280,100,300,70,325,62,405,62,437,97,455,95,485,68,505,62,824,62,830,118,838,185,850,228,868,265,887,278,900,268,918,225,935,222,942,203,950,230,965,243,990,270,1015,278,1250,278,1255,225,1262,172,1280,100,1300,72,1326,63,1350,68,1365,85,1370,105,1380,160,1392,222,1405,260,1440,278,1538,278])
	.concat(conv(R, [0,278,43,278,48,222,53,172,67,110,80,82,94,68,108,100,120,160,145,228,160,258,171,272,176,215,188,142,200,95,215,75,230,97,240,150,247,195,262,235,290,270,315,278,374,278,379,222,385,172,402,98,420,72,450,63,513,63,524,100,530,140,536,187,545,228,560,258,600,278,612,278,625,255,635,210,645,155,660,100,665,83,690,68,705,63,752,63,758,115,765,180,780,238,800,262,825,278,968,278]));
var line = '';
for (var x = 770; x <= 2466; x += 4) {
	line += (line ? 'L' : 'M') + x + ' ' + valueAt(stc, x).toFixed(1);
}
add('stc', 'path', { d: line, fill: 'none', stroke: '#555' });
for (var x = 770; x <= 2466; x += 4) {
	var y = valueAt(stc, x);
	var color = y < 656 ? '#3cb371' : y > 697 ? '#f4a460' : '#58585a';
	add('stc', 'ellipse', { cx: x, cy: y.toFixed(1), rx: 2.9, ry: 3, fill: color });
}
[824, 932, 1380, 1608, 1832, 1921, 2061, 2233].forEach(function (x) {
	add('stc', 'path', { d: 'M' + x + ' 704v-9m-3 4l3-4l3 4', fill: 'none', stroke: '#3cb371' });
});
[1321, 1685, 1877, 1962, 2165, 2321].forEach(function (x) {
	add('stc', 'path', { d: 'M' + x + ' 650v9m-3-4l3 4l3-4', fill: 'none', stroke: '#f4a460' });
});

// ppo ribbon
var upper = conv(L, [13,705,20,718,34,752,50,755,75,740,96,715,108,768,132,768,145,752,174,727,190,752,210,757,250,738,260,695,275,670,335,670,370,685,400,725,420,760,437,765,465,752,480,735,492,672,525,670,560,682,600,682,635,688,650,680,670,682,712,715,735,692,762,700,790,755,815,768,855,768,890,752,940,705,985,690,1055,703,1085,755,1105,769,1145,757,1175,728,1250,708,1265,675,1275,670,1300,676,1325,705,1345,745,1370,755,1460,742,1500,722,1538,712])
	.concat(conv(R, [0,712,45,702,90,688,115,690,165,700,180,685,220,685,245,735,295,763,325,762,355,740,385,688,405,679,440,680,450,690,510,695,545,733,600,748,615,742,650,687,670,690,705,712,760,722,820,740,850,742,865,757,885,760,915,742,967,727]));
var lower = conv(L, [13,808,35,852,50,857,75,845,96,820,108,870,125,872,145,857,172,828,195,855,215,855,248,840,262,785,275,772,345,773,380,790,410,848,437,865,465,852,482,835,494,775,525,770,570,782,635,788,670,782,712,817,735,795,762,800,790,855,815,870,855,870,890,855,942,805,985,792,1055,802,1088,858,1105,871,1145,855,1175,830,1250,808,1265,775,1280,771,1305,780,1345,848,1380,857,1395,845,1450,842,1500,822,1538,814])
	.concat(conv(R, [0,812,45,805,90,788,165,803,180,785,220,785,248,838,295,861,325,862,350,848,390,785,412,778,445,790,510,797,545,830,600,848,615,845,650,788,700,810,770,825,820,845,850,842,870,860,895,858,915,845,967,830]));
var G = '#008000', LG = '#32cd32', O = '#ff4500', S = '#f4a460';
var zones = [[784,799,G],[829,851,LG],[851,859,G],[887,911,G],[931,939,S],[939,1007,O],[1007,1016,S],[1035,1043,G],[1043,1067,LG],[1067,1076,G],[1087,1140,O],[1140,1163,S],[1163,1168,O],[1168,1191,S],[1191,1208,O],[1208,1215,S],[1291,1299,G],[1299,1347,LG],[1347,1363,G],[1492,1527,LG],[1527,1536,G],[1607,1639,O],[1639,1647,S],[1676,1700,G],[1855,1876,S],[1920,1951,S],[1987,2000,G],[2000,2024,LG],[2024,2040,G],[2060,2075,S],[2075,2091,O],[2091,2111,S],[2239,2259,S],[2387,2424,G]];
for (var x = 768; x < 2466; x += 4) {
	var up = Math.round(valueAt(upper, x)), low = Math.round(valueAt(lower, x)), z = null;
	zones.forEach(function (item) {
		if (x + 1 >= item[0] && x + 1 < item[1]) {
			z = item[2];
		}
	});
	add('ppo', 'rect', { x: x, y: up, width: 3, height: low - up, fill: 'silver' });
	if (z === O || z === S) {
		add('ppo', 'rect', { x: x, y: up + 1, width: 3, height: 875 - up, fill: z });
	} else if (z) {
		add('ppo', 'rect', { x: x, y: 876, width: 3, height: low - 877, fill: z });
	}
}

// candles
var seed = 7;
function rnd() {
	seed = (seed * 16807) % 2147483647;
	return seed / 2147483647;
}
var paint = { r: ['#8b0000', '#8b0000', '#a52a2a', '#32a032'], g: ['#008000', '#008000', '#228b22', '#a0522d'], s: ['#708090', '#708090', '#808a94', '#a05050'] };
[
	[A, 'r', [25,545,40,625,65,610,95,590,145,605]],
	[A, 'r', [152,860,165,800,235,795,265,835,270,890,300,950,330,990,360,1050,380,1070,388,965,425,970]],
	[A, 's', [428,975,445,1000,465,970,490,985,510,1030,545,1035]],
	[A, 'r', [555,1040,575,1065,610,1060,625,1120,640,1145,660,1100,700,1080,730,1090]],
	[A, 's', [735,990,745,925]],
	[A, 'g', [755,905,790,935,800,890,855,895,865,850,890,790,900,770,925,795,962,755,970,660,985,600,1010,590,1040,610,1080,580]],
	[A, 'g', [1087,440,1115,425,1150,460,1170,500,1213,525]],
	[A, 's', [1220,520,1270,525,1335,515,1350,480,1380,470,1420,470,1455,450,1475,435]],
	[A, 'g', [1485,445,1540,450,1555,415,1568,425]],
	[B, 'g', [10,445,30,415,50,430,90,435,95,500,105,525]],
	[B, 's', [112,530,130,540,150,500,160,520,180,485,255,490,270,520,295,490]],
	[B, 'g', [300,485,320,480,370,475,378,330,410,305,440,345,490,355,505,395,545,375]],
	[B, 's', [552,370,570,370,610,340,622,375,640,385,665,370,735,345,760,365,840,350,890,335]],
	[B, 'g', [898,325,920,315,1020,318,1070,300,1080,265,1130,270,1150,295,1180,320,1205,305]],
	[B, 's', [1212,325,1230,335,1250,350]],
	[B, 'r', [1258,370,1310,400,1320,375,1355,365,1382,355]],
	[B, 's', [1390,320,1412,300]],
	[B, 'g', [1420,285,1450,270,1490,270]],
	[C, 'g', [0,530,20,520,60,500,90,480,115,490,125,530,140,515,180,515]],
	[C, 's', [188,530,215,545,240,530,255,475]],
	[C, 'g', [265,445,300,440,320,460,360,450,410,450,430,440,455,460]],
	[C, 's', [462,455,495,480,525,470,545,455,575,480]],
	[C, 'r', [582,500,595,515,630,505,640,480,670,495,735,490]]
].forEach(function (s) {
	var pts = conv(s[0], s[2]);
	for (var x = 768 + Math.ceil((pts[0][0] - 768) / 4) * 4; x <= pts[pts.length - 1][0]; x += 4) {
		var y = valueAt(pts, x), next = valueAt(pts, x + 4);
		var h = Math.round(Math.min(40, Math.abs(next - y) + 2 + rnd() * 7));
		var wick = Math.round(rnd() * 7);
		var tail = Math.round(rnd() * 7);
		var color = paint[s[1]][Math.floor(rnd() * 4)];
		var top = Math.round((y + next) / 2 + rnd() * 4 - 2 - h / 2);
		add('candles', 'rect', { x: x + 1, y: top - wick, width: 1, height: h + wick + tail, fill: color });
		add('candles', 'rect', { x: x, y: top, width: 3, height: h, fill: color });
	}
});

// signal marks
function mark(list, fn) {
	list.forEach(function (p) {
		fn('translate(' + p[0] + ' ' + p[1] + ')');
	});
}
function disc(color, rot) {
	return function (t) {
		add('marks', 'ellipse', { transform: t, rx: 11.5, ry: 11, fill: color });
		add('marks', 'path', { transform: t + rot, d: 'M-4 12V-3h-3L0-10L7-3H4V12z', fill: '#1c1b20' });
	};
}
mark([[1116, 534], [2236, 301]], disc('#3cb371', ''));
mark([[1636, 261], [2392, 225]], disc('#dc143c', ' rotate(180)'));

function arrow(color, rot) {
	return function (t) {
		add('marks', 'path', { transform: t + rot, d: 'M-5 6L3-3M-6-1L4-4L3 7', fill: 'none', stroke: color, 'stroke-width': 3 });
	};
}
mark([[1098, 549], [1421, 341], [1578, 351], [1842, 299], [2073, 307], [2233, 267]], arrow('#32cd32', ''));
mark([[1009, 521], [2002, 276], [2390, 247]], arrow('#ffa500', ' rotate(90)'));

function head(color, rot) {
	return function (t) {
		add('marks', 'path', { transform: t + rot, d: 'M0-6L-6 6L0 2z', fill: color });
		add('marks', 'path', { transform: t + rot, d: 'M0-6L7 6L0 2', fill: 'none', stroke: color });
	};
}
mark([[1031, 548], [1656, 312], [2255, 262]], head('#0000ff', ''));
mark([[1532, 326], [1997, 267], [2361, 241]], head('#ff0000', ' rotate(180)'));
```
